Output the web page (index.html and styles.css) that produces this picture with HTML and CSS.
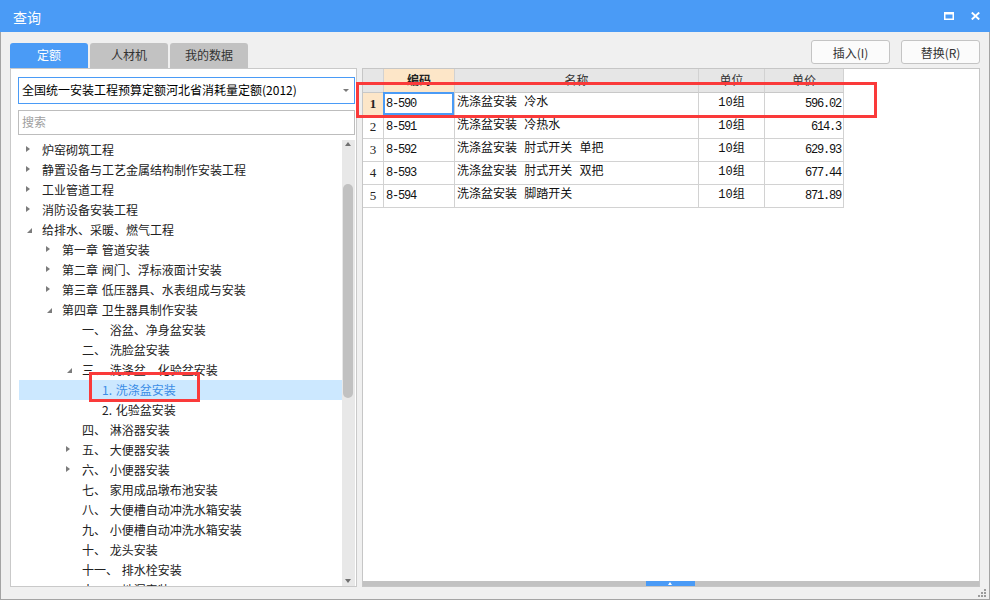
FILE: index.html
```html
<!DOCTYPE html>
<html lang="zh-CN">
<head>
<meta charset="utf-8">
<title>查询</title>
<link rel="stylesheet" href="styles.css">
</head>
<body>
<div class="window">
  <div class="titlebar">
    <span class="title">查询</span>
    <div class="win-ctrls">
      <svg class="ico" width="10" height="8" viewBox="0 0 10 8"><rect x="0.75" y="1" width="8.5" height="6.25" fill="none" stroke="#fff" stroke-width="1.5"/><rect x="0" y="0" width="10" height="2.5" fill="#fff"/></svg>
      <svg class="ico" width="9" height="8" viewBox="0 0 9 8"><path d="M0.8 0.5 L8.2 7.5 M8.2 0.5 L0.8 7.5" stroke="#fff" stroke-width="1.9" fill="none"/></svg>
    </div>
  </div>
  <div class="body">
    <div class="topbar">
      <div class="tabs">
        <div class="tab active">定额</div>
        <div class="tab">人材机</div>
        <div class="tab">我的数据</div>
      </div>
      <div class="actions">
        <button class="btn">插入(I)</button>
        <button class="btn">替换(R)</button>
      </div>
    </div>
    <div class="panels">
      <div class="left">
        <div class="select">全国统一安装工程预算定额河北省消耗量定额(2012)<span class="caret"></span></div>
        <div class="search">搜索</div>
        <div class="tree">
          <div class="tree-list">
            <div class="row l0"><span class="arr closed"></span><span>炉窑砌筑工程</span></div>
            <div class="row l0"><span class="arr closed"></span><span>静置设备与工艺金属结构制作安装工程</span></div>
            <div class="row l0"><span class="arr closed"></span><span>工业管道工程</span></div>
            <div class="row l0"><span class="arr closed"></span><span>消防设备安装工程</span></div>
            <div class="row l0"><span class="arr open"></span><span>给排水、采暖、燃气工程</span></div>
            <div class="row l1"><span class="arr closed"></span><span>第一章 管道安装</span></div>
            <div class="row l1"><span class="arr closed"></span><span>第二章 阀门、浮标液面计安装</span></div>
            <div class="row l1"><span class="arr closed"></span><span>第三章 低压器具、水表组成与安装</span></div>
            <div class="row l1"><span class="arr open"></span><span>第四章 卫生器具制作安装</span></div>
            <div class="row l2"><span class="arr"></span><span>一、 浴盆、净身盆安装</span></div>
            <div class="row l2"><span class="arr"></span><span>二、 洗脸盆安装</span></div>
            <div class="row l2"><span class="arr open"></span><span>三、 洗涤盆、化验盆安装</span></div>
            <div class="row l3 selected"><span class="arr"></span><span>1. 洗涤盆安装</span></div>
            <div class="row l3"><span class="arr"></span><span>2. 化验盆安装</span></div>
            <div class="row l2"><span class="arr"></span><span>四、 淋浴器安装</span></div>
            <div class="row l2"><span class="arr closed"></span><span>五、 大便器安装</span></div>
            <div class="row l2"><span class="arr closed"></span><span>六、 小便器安装</span></div>
            <div class="row l2"><span class="arr"></span><span>七、 家用成品墩布池安装</span></div>
            <div class="row l2"><span class="arr"></span><span>八、 大便槽自动冲洗水箱安装</span></div>
            <div class="row l2"><span class="arr"></span><span>九、 小便槽自动冲洗水箱安装</span></div>
            <div class="row l2"><span class="arr"></span><span>十、 龙头安装</span></div>
            <div class="row l2"><span class="arr"></span><span>十一、 排水栓安装</span></div>
            <div class="row l2"><span class="arr"></span><span>十二、 地漏安装</span></div>
          </div>
          <div class="vscroll">
            <span class="vs-up"></span>
            <span class="vs-thumb"></span>
            <span class="vs-down"></span>
          </div>
        </div>
      </div>
      <div class="right">
        <div class="grid-area">
          <div class="grid">
            <div class="hc"></div>
            <div class="hc sorted">编码</div>
            <div class="hc">名称</div>
            <div class="hc">单位</div>
            <div class="hc">单价</div>

            <div class="c num cur">1</div>
            <div class="c code focus">8-590</div>
            <div class="c name">洗涤盆安装 冷水</div>
            <div class="c unit">10组</div>
            <div class="c price">596.02</div>

            <div class="c num">2</div>
            <div class="c code">8-591</div>
            <div class="c name">洗涤盆安装 冷热水</div>
            <div class="c unit">10组</div>
            <div class="c price">614.3</div>

            <div class="c num">3</div>
            <div class="c code">8-592</div>
            <div class="c name">洗涤盆安装 肘式开关 单把</div>
            <div class="c unit">10组</div>
            <div class="c price">629.93</div>

            <div class="c num">4</div>
            <div class="c code">8-593</div>
            <div class="c name">洗涤盆安装 肘式开关 双把</div>
            <div class="c unit">10组</div>
            <div class="c price">677.44</div>

            <div class="c num">5</div>
            <div class="c code">8-594</div>
            <div class="c name">洗涤盆安装 脚踏开关</div>
            <div class="c unit">10组</div>
            <div class="c price">871.89</div>
          </div>
        </div>
        <div class="hscroll"><span class="hs-thumb"></span></div>
      </div>
    </div>
    <svg class="grip" width="10" height="10" viewBox="0 0 10 10">
      <rect x="6" y="1" width="2" height="2" fill="#9c9c9c"/>
      <rect x="3" y="4" width="2" height="2" fill="#9c9c9c"/>
      <rect x="6" y="4" width="2" height="2" fill="#9c9c9c"/>
      <rect x="0" y="7" width="2" height="2" fill="#9c9c9c"/>
      <rect x="3" y="7" width="2" height="2" fill="#9c9c9c"/>
      <rect x="6" y="7" width="2" height="2" fill="#9c9c9c"/>
    </svg>
  </div>
  <div class="mark mark-table"></div>
  <div class="mark mark-tree"></div>
</div>
</body>
</html>
```

FILE: styles.css
```css
* { box-sizing: border-box; margin: 0; padding: 0; }
body {
  margin: 0;
  font-family: "Noto Sans CJK SC", "Noto Sans", sans-serif;
  font-size: 12px;
  color: #222;
  background: #fff;
}
.window {
  position: relative;
  width: 990px;
  height: 600px;
  display: flex;
  flex-direction: column;
}
.titlebar {
  height: 32px;
  flex: none;
  background: #4a9bf6;
  color: #fff;
  display: flex;
  align-items: center;
  justify-content: space-between;
  padding: 0 10px 0 13px;
}
.title { font-size: 14px; line-height: 1; margin-top: 1px; }
.win-ctrls { display: flex; align-items: center; gap: 17px; margin-top: -1px; }
.ico { display: block; }

.body {
  position: relative;
  flex: 1;
  background: #f0f0f0;
  border: 1px solid #a4a4a4;
  border-top: 0;
  padding: 0 0 12px 9px;
  display: flex;
  flex-direction: column;
}
.topbar {
  height: 36px;
  width: 970px;
  display: flex;
}
.tabs {
  align-self: flex-end;
  display: flex;
  gap: 2px;
}
.tab {
  width: 78px;
  height: 25px;
  line-height: 24px;
  text-align: center;
  background: #c2c2c2;
  color: #333;
  border-radius: 3px 3px 0 0;
  font-size: 12px;
}
.tab.active { background: #4a9bf6; color: #fff; }
.actions {
  margin-left: auto;
  margin-top: 8px;
  display: flex;
  gap: 11px;
}
.btn {
  width: 79px;
  height: 24px;
  font: inherit;
  font-size: 12px;
  color: #333;
  background: #fbfbfb;
  border: 1px solid #c4c4c4;
  border-radius: 3px;
}

.panels {
  display: flex;
  gap: 5px;
  height: 519px;
}
.left {
  width: 347px;
  background: #fff;
  border: 1px solid #c9c9c9;
  padding: 8px 1px 0 7px;
  display: flex;
  flex-direction: column;
}
.select {
  position: relative;
  height: 27px;
  border: 1px solid #4a9bf6;
  padding-left: 3px;
  line-height: 24px;
  color: #000;
  white-space: nowrap;
}
.caret {
  position: absolute;
  right: 5px;
  top: 11px;
  border-left: 3px solid transparent;
  border-right: 3px solid transparent;
  border-top: 3px solid #7a7a7a;
}
.search {
  margin-top: 6px;
  height: 25px;
  border: 1px solid #bdbdbd;
  padding-left: 3px;
  line-height: 22px;
  color: #a0a0a0;
}
.tree {
  margin-top: 5px;
  margin-left: 1px;
  flex: 1;
  min-height: 0;
  display: flex;
  overflow: hidden;
}
.tree-list { flex: 1; overflow: hidden; word-spacing: 1px; }
.row {
  height: 20px;
  display: flex;
  align-items: center;
  padding-bottom: 2px;
  white-space: nowrap;
  color: #222;
}
.row.l0 { padding-left: 7px; }
.row.l1 { padding-left: 27px; }
.row.l2 { padding-left: 47px; }
.row.l3 { padding-left: 67px; }
.row.selected { background: #cce8ff; color: #3b8de6; }
.arr {
  width: 16px;
  height: 20px;
  flex: none;
  position: relative;
  margin-bottom: -2px;
}
.arr.closed::before {
  content: "";
  position: absolute;
  left: 0;
  top: 6px;
  border-left: 4px solid #7c7c7c;
  border-top: 3.5px solid transparent;
  border-bottom: 3.5px solid transparent;
}
.arr.open::before {
  content: "";
  position: absolute;
  left: 1px;
  top: 8px;
  border-bottom: 5px solid #7c7c7c;
  border-left: 5px solid transparent;
}
.vscroll {
  width: 13px;
  flex: none;
  background: #e8e8e8;
  position: relative;
}
.vs-up {
  position: absolute;
  left: 3px;
  top: 2px;
  border-left: 3.5px solid transparent;
  border-right: 3.5px solid transparent;
  border-bottom: 4px solid #707070;
}
.vs-down {
  position: absolute;
  left: 3px;
  bottom: 3px;
  border-left: 3.5px solid transparent;
  border-right: 3.5px solid transparent;
  border-top: 4px solid #707070;
}
.vs-thumb {
  position: absolute;
  left: 1px;
  top: 44px;
  width: 10px;
  height: 214px;
  border-radius: 5px;
  background: #c1c1c1;
}

.right {
  width: 618px;
  background: #fff;
  border: 1px solid #c6c6c6;
  display: flex;
  flex-direction: column;
}
.grid-area { flex: 1; min-height: 0; }
.grid {
  display: grid;
  grid-template-columns: 21px 71px 244px 66px 79px;
  grid-template-rows: 24px repeat(5, 23px);
  width: 481px;
}
.hc, .c {
  border-right: 1px solid #d2d2d2;
  border-bottom: 1px solid #d2d2d2;
  white-space: nowrap;
  overflow: visible;
}
.hc {
  background: #e6e6e6;
  text-align: center;
  line-height: 22px;
  color: #333;
  border-bottom-color: #c8c8c8;
}
.hc.sorted { background: #fde6c8; font-weight: bold; color: #222; }
.c { line-height: 22px; color: #111; position: relative; }
.num {
  font-family: "Liberation Serif", serif;
  font-size: 13px;
  text-align: center;
  color: #222;
}
.num.cur { background: #fde6c8; font-weight: bold; }
.code {
  font-family: "Liberation Mono", monospace;
  letter-spacing: -1.2px;
  padding-left: 2px;
}
.code.focus::after {
  content: "";
  position: absolute;
  left: -1px;
  top: -1px;
  right: 0;
  bottom: 0;
  border: 2px solid #4a9bf6;
}
.name {
  font-family: "Liberation Mono", "Noto Sans CJK SC", monospace;
  padding-left: 2px;
  line-height: 21px;
}
.unit {
  font-family: "Liberation Mono", "Noto Sans CJK SC", monospace;
  text-align: center;
  line-height: 21px;
}
.price {
  font-family: "Liberation Mono", monospace;
  letter-spacing: -1.2px;
  text-align: right;
  padding-right: 2px;
}
.hscroll {
  height: 5px;
  flex: none;
  background: #c2c2c2;
  position: relative;
}
.hs-thumb {
  position: absolute;
  left: 283px;
  top: 0;
  width: 49px;
  height: 5px;
  background: #4a9bf6;
}
.hs-thumb::after {
  content: "";
  position: absolute;
  left: 22px;
  top: 1px;
  border-left: 2.5px solid transparent;
  border-right: 2.5px solid transparent;
  border-bottom: 3px solid #fff;
}
.grip {
  position: absolute;
  right: 1px;
  bottom: 1px;
}

.mark {
  position: absolute;
  border: 3px solid #fa3a3a;
  pointer-events: none;
}
.mark-table { left: 356px; top: 82px; width: 521px; height: 36px; }
.mark-tree { left: 89px; top: 372px; width: 111px; height: 30px; }
```
